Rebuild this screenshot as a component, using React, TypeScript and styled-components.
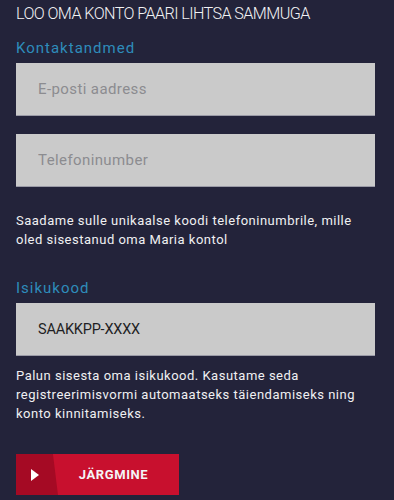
import styled, { createGlobalStyle } from 'styled-components';

const GlobalStyle = createGlobalStyle`
  html, body {
    margin: 0;
    padding: 0;
    background: #23233a;
  }
  body {
    font-family: Roboto, 'Liberation Sans', sans-serif;
  }
`;

const Page = styled.div`
  padding: 3px 19px 0 16px;
  display: flex;
  flex-direction: column;
`;

const Title = styled.h1`
  margin: 0;
  font-size: 16.2px;
  line-height: 22px;
  font-weight: 300;
  color: #f2f2f4;
  letter-spacing: -0.6px;
`;

const SectionLabel = styled.h2<{ $top: number }>`
  margin: ${(p) => p.$top}px 0 6px;
  font-size: 15px;
  line-height: 18px;
  font-weight: 400;
  color: #2e8cba;
  letter-spacing: 1px;
`;

const Field = styled.input<{ $last?: boolean }>`
  box-sizing: border-box;
  width: 100%;
  height: 53px;
  margin: 0 0 ${(p) => (p.$last ? 0 : 18)}px;
  padding: 0 22px;
  border: none;
  border-bottom: 1px solid #9a9aa6;
  background: #cacaca;
  font-family: Roboto, 'Liberation Sans', sans-serif;
  font-size: 14.5px;
  letter-spacing: -0.2px;
  color: #1f1f24;
  outline: none;

  &::placeholder {
    font-size: 15px;
    letter-spacing: 0.4px;
    color: #8c8c90;
  }
`;

const Hint = styled.p<{ $top: number }>`
  margin: ${(p) => p.$top}px 0 0;
  font-size: 13px;
  line-height: 19px;
  color: #f0f0f2;
  letter-spacing: 0.5px;
`;

const NextButton = styled.button`
  display: flex;
  align-items: stretch;
  width: 163px;
  height: 41px;
  margin-top: 31px;
  padding: 0;
  border: none;
  background: #c8102e;
  cursor: pointer;
  overflow: hidden;
`;

const ArrowPart = styled.span`
  display: flex;
  align-items: center;
  justify-content: center;
  width: 38px;
  padding-right: 4px;
  background: #a50a24;
  clip-path: polygon(0 0, 88% 0, 100% 100%, 0 100%);
`;

const ButtonLabel = styled.span`
  flex: 1;
  display: flex;
  align-items: center;
  justify-content: center;
  padding-right: 10px;
  font-family: Roboto, 'Liberation Sans', sans-serif;
  font-size: 13px;
  font-weight: 700;
  letter-spacing: 0.6px;
  color: #f4f4f6;
`;

export default function App() {
  return (
    <>
      <GlobalStyle />
      <Page>
        <Title>LOO OMA KONTO PAARI LIHTSA SAMMUGA</Title>
        <SectionLabel $top={14}>Kontaktandmed</SectionLabel>
        <Field placeholder="E-posti aadress" />
        <Field placeholder="Telefoninumber" />
        <Hint $top={6}>
          Saadame sulle unikaalse koodi telefoninumbrile, mille oled sisestanud oma Maria kontol
        </Hint>
        <SectionLabel $top={30}>Isikukood</SectionLabel>
        <Field defaultValue="SAAKKPP-XXXX" $last />
        <Hint $top={10}>
          Palun sisesta oma isikukood. Kasutame seda registreerimisvormi automaatseks täiendamiseks
          ning konto kinnitamiseks.
        </Hint>
        <NextButton>
          <ArrowPart>
            <svg width="8" height="12" viewBox="0 0 8 12">
              <path d="M0 0 L8 6 L0 12 Z" fill="#ffffff" />
            </svg>
          </ArrowPart>
          <ButtonLabel>JÄRGMINE</ButtonLabel>
        </NextButton>
      </Page>
    </>
  );
}
